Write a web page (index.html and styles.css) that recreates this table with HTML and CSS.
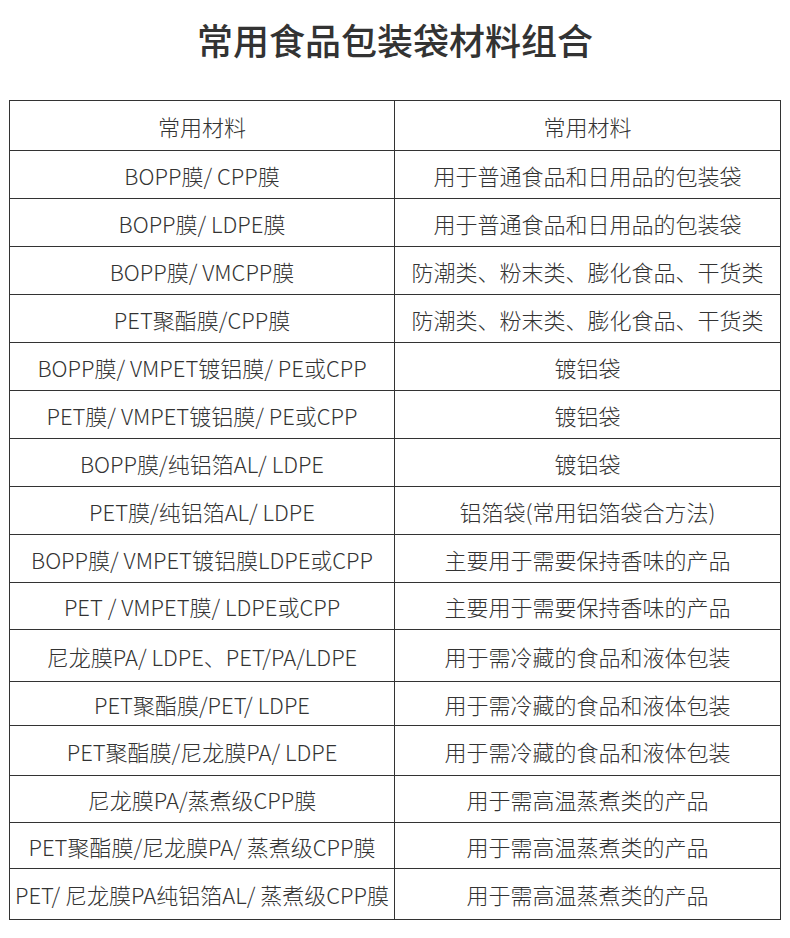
FILE: index.html
```html
<!DOCTYPE html>
<html lang="zh-CN">
<head>
<meta charset="utf-8">
<title>常用食品包装袋材料组合</title>
<link rel="stylesheet" href="styles.css">
</head>
<body>
<div class="page">
  <h1 class="title">常用食品包装袋材料组合</h1>
  <div class="table">
    <div class="cell">常用材料</div><div class="cell">常用材料</div>
    <div class="cell">BOPP膜/ CPP膜</div><div class="cell">用于普通食品和日用品的包装袋</div>
    <div class="cell">BOPP膜/ LDPE膜</div><div class="cell">用于普通食品和日用品的包装袋</div>
    <div class="cell">BOPP膜/ VMCPP膜</div><div class="cell">防潮类、粉末类、膨化食品、干货类</div>
    <div class="cell">PET聚酯膜/CPP膜</div><div class="cell">防潮类、粉末类、膨化食品、干货类</div>
    <div class="cell">BOPP膜/ VMPET镀铝膜/ PE或CPP</div><div class="cell">镀铝袋</div>
    <div class="cell">PET膜/ VMPET镀铝膜/ PE或CPP</div><div class="cell">镀铝袋</div>
    <div class="cell">BOPP膜/纯铝箔AL/ LDPE</div><div class="cell">镀铝袋</div>
    <div class="cell">PET膜/纯铝箔AL/ LDPE</div><div class="cell">铝箔袋(常用铝箔袋合方法)</div>
    <div class="cell">BOPP膜/ VMPET镀铝膜LDPE或CPP</div><div class="cell">主要用于需要保持香味的产品</div>
    <div class="cell">PET / VMPET膜/ LDPE或CPP</div><div class="cell">主要用于需要保持香味的产品</div>
    <div class="cell">尼龙膜PA/ LDPE、PET/PA/LDPE</div><div class="cell">用于需冷藏的食品和液体包装</div>
    <div class="cell">PET聚酯膜/PET/ LDPE</div><div class="cell">用于需冷藏的食品和液体包装</div>
    <div class="cell">PET聚酯膜/尼龙膜PA/ LDPE</div><div class="cell">用于需冷藏的食品和液体包装</div>
    <div class="cell">尼龙膜PA/蒸煮级CPP膜</div><div class="cell">用于需高温蒸煮类的产品</div>
    <div class="cell">PET聚酯膜/尼龙膜PA/ 蒸煮级CPP膜</div><div class="cell">用于需高温蒸煮类的产品</div>
    <div class="cell">PET/ 尼龙膜PA纯铝箔AL/ 蒸煮级CPP膜</div><div class="cell">用于需高温蒸煮类的产品</div>
  </div>
</div>
</body>
</html>
```
FILE: styles.css
```css
html, body {
  margin: 0;
  padding: 0;
  background: #ffffff;
}
body {
  font-family: "Noto Sans CJK SC", "Noto Sans", sans-serif;
  color: #333333;
}
.page {
  width: 790px;
  padding-left: 9px;
  box-sizing: border-box;
}
.title {
  margin: 0;
  height: 100px;
  padding-bottom: 22px;
  box-sizing: border-box;
  display: flex;
  align-items: center;
  justify-content: center;
  font-size: 36px;
  font-weight: 500;
  line-height: 1;
  color: #333333;
  width: 772px;
}
.table {
  display: grid;
  width: 772px;
  box-sizing: border-box;
  border-top: 1px solid #333333;
  border-left: 1px solid #333333;
  grid-template-columns: 385px 386px;
  grid-template-rows: 50px repeat(9, 48px) 47px 52px 44px 50px 47px 46px 51px;
}
.cell {
  box-sizing: border-box;
  border-right: 1px solid #333333;
  border-bottom: 1px solid #333333;
  display: flex;
  align-items: center;
  justify-content: center;
  font-size: 22px;
  font-weight: 300;
  line-height: 1;
  white-space: nowrap;
  color: #333333;
}
```
